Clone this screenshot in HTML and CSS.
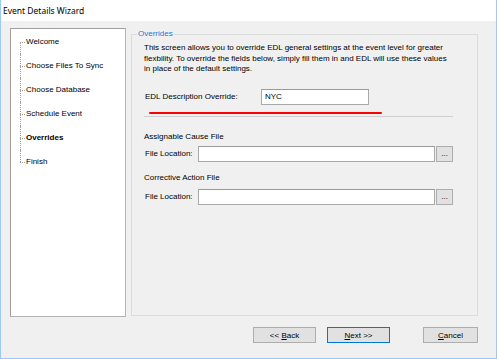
FILE: index.html
```html
<!DOCTYPE html>
<html lang="en">
<head>
    <meta charset="UTF-8">
    <title>Event Details Wizard</title>
    <link rel="stylesheet" href="styles.css">
</head>
<body>
    <div class="window">
        <div class="titlebar">Event Details Wizard</div>

        <div class="main">
            <ul class="tree">
                <li>Welcome</li>
                <li>Choose Files To Sync</li>
                <li>Choose Database</li>
                <li>Schedule Event</li>
                <li class="current">Overrides</li>
                <li>Finish</li>
            </ul>

            <div class="group">
                <span class="group-title">Overrides</span>

                <p class="intro">
                    This screen allows you to override EDL general settings at the event level for greater<br>
                    flexbility. To override the fields below, simply fill them in and EDL will use these values<br>
                    in place of the default settings.
                </p>

                <div class="row desc-row">
                    <label>EDL Description Override:</label>
                    <input type="text" value="NYC">
                </div>
                <div class="mark"></div>

                <div class="sep"></div>

                <div class="section">Assignable Cause File</div>
                <div class="row file-row">
                    <label>File Location:</label>
                    <input type="text">
                    <button class="browse">...</button>
                </div>

                <div class="section second">Corrective Action File</div>
                <div class="row file-row">
                    <label>File Location:</label>
                    <input type="text">
                    <button class="browse">...</button>
                </div>
            </div>
        </div>

        <div class="buttons">
            <button>&lt;&lt; <u>B</u>ack</button>
            <button class="default"><u>N</u>ext &gt;&gt;</button>
            <button class="cancel"><u>C</u>ancel</button>
        </div>
    </div>
</body>
</html>
```

FILE: styles.css
```css
* {
    box-sizing: border-box;
}

body {
    margin: 0;
    background: #f0f0f0;
    font-family: 'Liberation Sans', Arial, sans-serif;
    font-size: 8px;
    color: #000;
}

.window {
    width: 497px;
    height: 359px;
    background: #f0f0f0;
    border: 1px solid #9ccaf4;
    border-top: none;
    display: flex;
    flex-direction: column;
}

.titlebar {
    height: 21px;
    background: #fff;
    padding-left: 2px;
    line-height: 21px;
    font-family: 'Noto Sans', sans-serif;
    font-size: 8.5px;
}

.main {
    display: flex;
    align-items: flex-start;
    padding: 7px 0 0 9px;
}

/* left step list */
.tree {
    list-style: none;
    margin: 0;
    padding: 1px 0 0 0;
    width: 116px;
    height: 289px;
    background: #fff;
    border: 1px solid #a0a0a0;
    border-right-color: #b4b4b4;
    border-bottom-color: #b4b4b4;
}

.tree li {
    position: relative;
    height: 24px;
    line-height: 24px;
    padding-left: 15px;
}

.tree li::before {
    content: "";
    position: absolute;
    left: 9px;
    top: 12px;
    width: 5px;
    border-top: 1px dotted #a0a0a0;
}

.tree li::after {
    content: "";
    position: absolute;
    left: 9px;
    top: 0;
    height: 24px;
    border-left: 1px dotted #a0a0a0;
}

.tree li:first-child::after {
    top: 12px;
    height: 12px;
}

.tree li:last-child::after {
    height: 12px;
}

.tree .current {
    font-weight: bold;
}

/* overrides group */
.group {
    position: relative;
    margin: 6px 0 0 5px;
    width: 347px;
    height: 282px;
    border: 1px solid #dcdcdc;
    padding: 8px 24px 0 12px;
}

.group-title {
    position: absolute;
    top: -7px;
    left: 5px;
    padding: 0 1px;
    background: #f0f0f0;
    color: #1c7ad8;
    line-height: 12px;
}

.intro {
    margin: 0;
    line-height: 10.5px;
}

.row {
    display: flex;
    align-items: center;
    height: 16px;
}

.row label {
    padding-left: 1px;
}

.row input {
    height: 16px;
    border: 1px solid #a9a9a9;
    border-top-color: #9a9a9a;
    background: #fff;
    font: inherit;
    padding: 0 3px;
    outline: none;
}

.desc-row {
    margin-top: 14px;
}

.desc-row label {
    width: 117px;
}

.desc-row input {
    width: 108px;
}

.mark {
    margin: 7px 0 0 5px;
    width: 233px;
    height: 2px;
    border-radius: 1px;
    background: #f00;
}

.sep {
    margin-top: 2px;
    height: 1px;
    background: #cfcfcf;
}

.section {
    margin-top: 14px;
    line-height: 11px;
}

.section.second {
    margin-top: 10px;
}

.file-row {
    margin-top: 4px;
}

.section.second + .file-row {
    margin-top: 6px;
}

.file-row label {
    width: 54px;
}

.file-row input {
    width: 238px;
}

button {
    font: inherit;
    color: #000;
    background: #e1e1e1;
    border: 1px solid #adadad;
    padding: 0;
}

.browse {
    margin-left: 1px;
    width: 17px;
    height: 16px;
    line-height: 10px;
}

.buttons {
    display: flex;
    justify-content: flex-end;
    margin-top: 10px;
    padding-right: 18px;
}

.buttons button {
    width: 63px;
    height: 16px;
    margin-left: 11px;
}

.buttons .default {
    border-color: #0078d7;
}

.buttons .cancel {
    width: 55px;
    margin-left: 33px;
}
```
